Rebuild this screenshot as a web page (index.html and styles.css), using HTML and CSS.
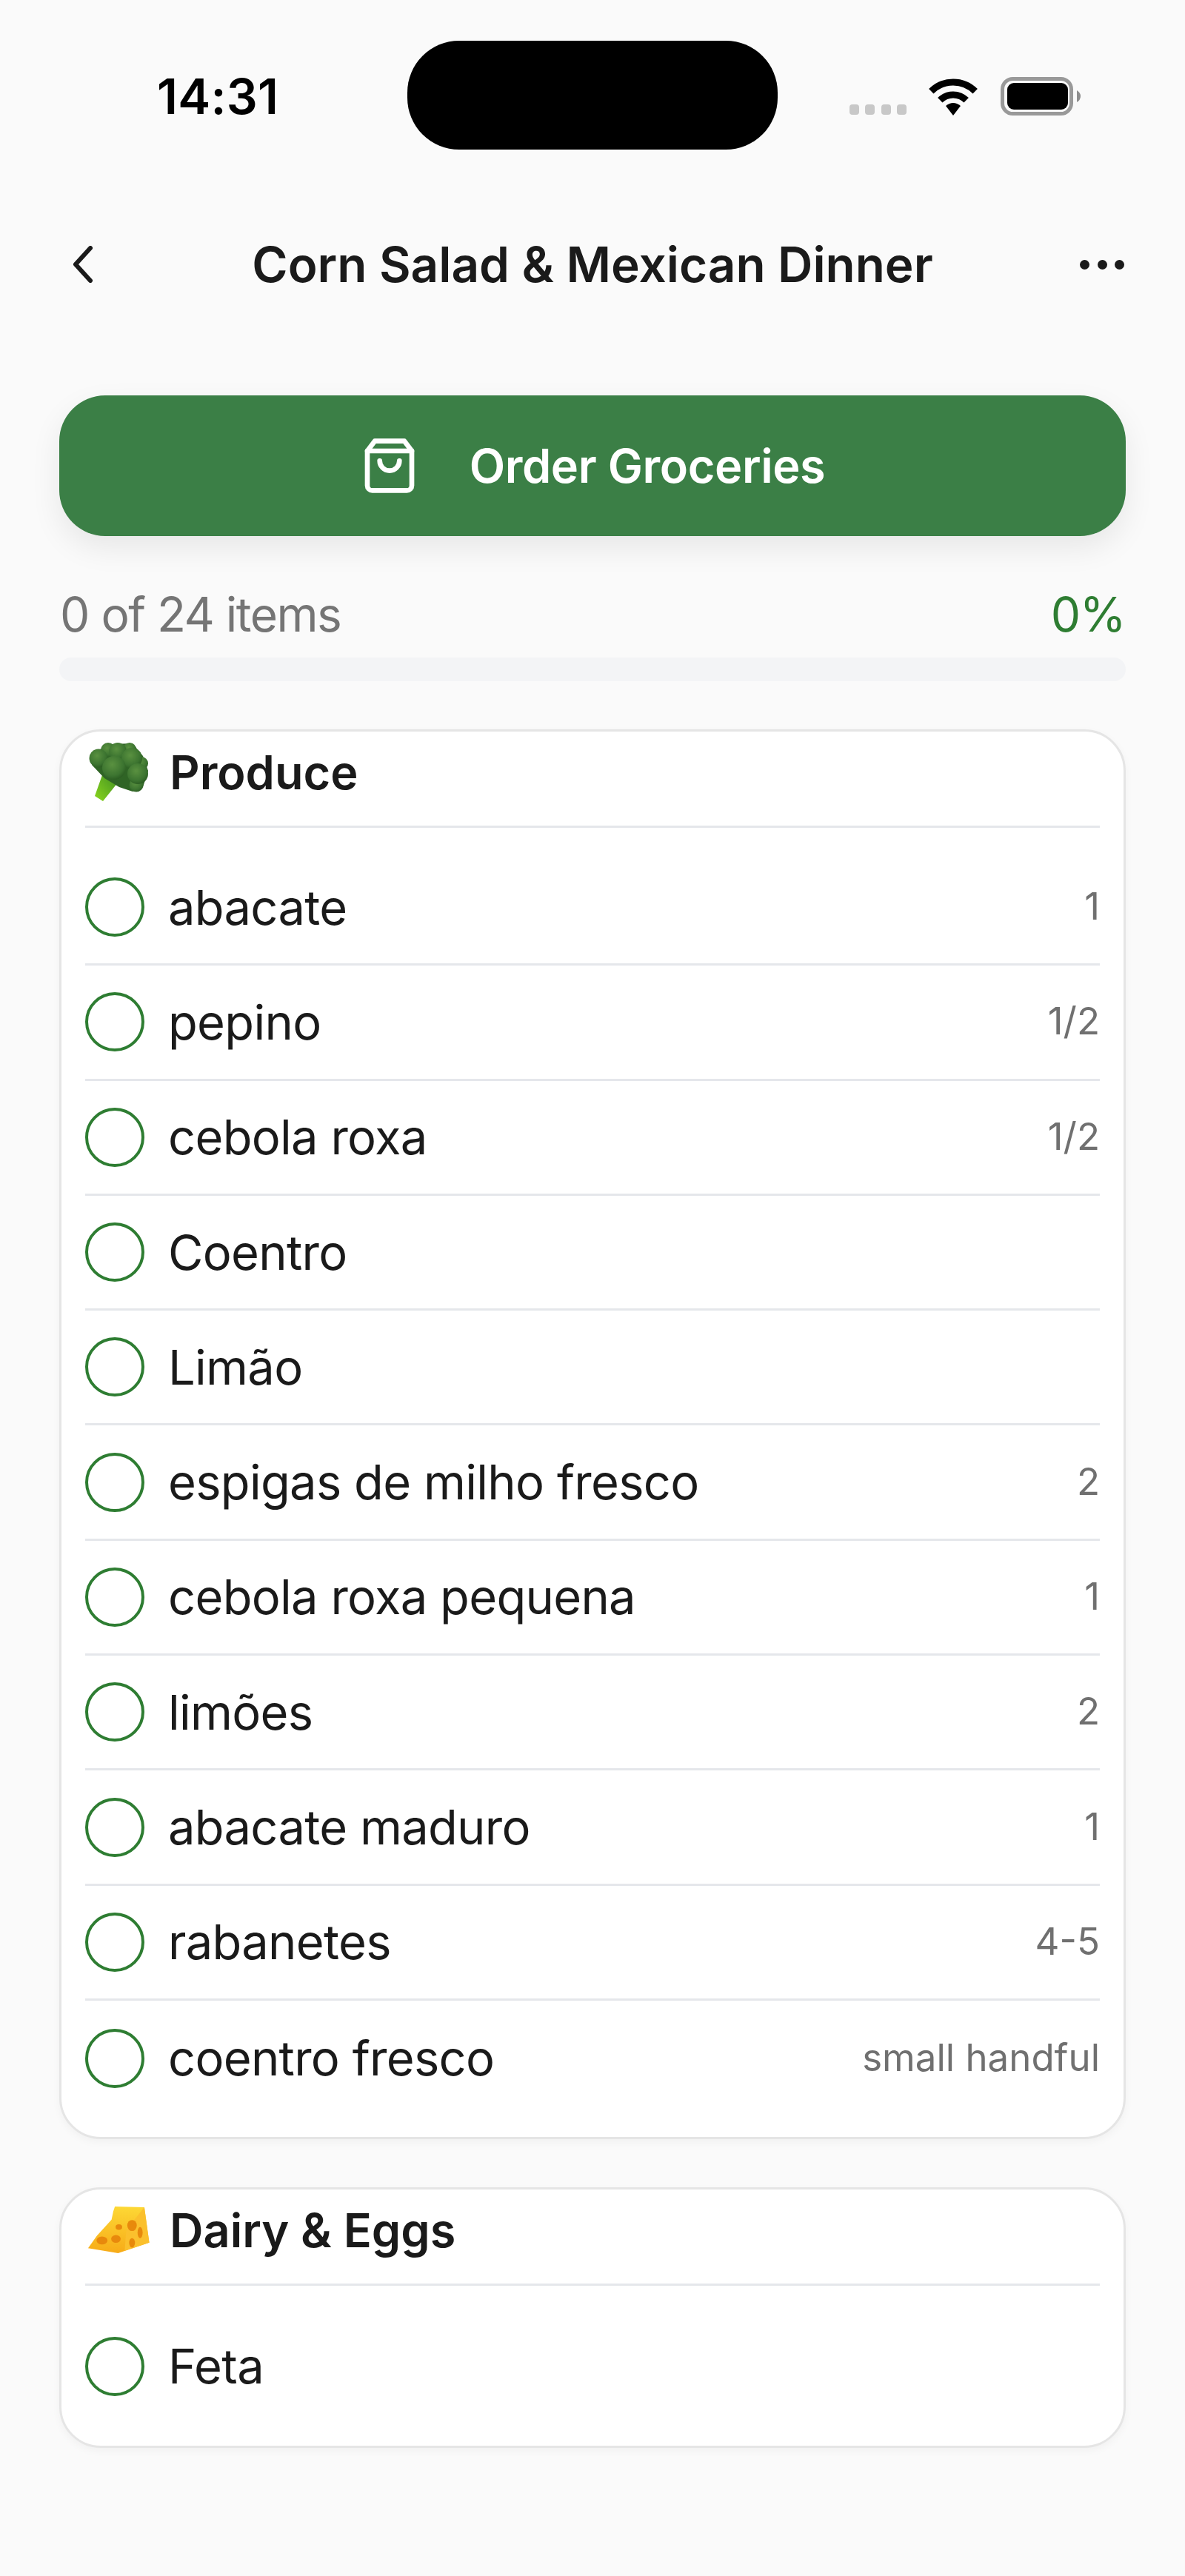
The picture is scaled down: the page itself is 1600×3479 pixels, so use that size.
FILE: index.html
```html
<!DOCTYPE html>
<html lang="pt">
<head>
    <meta charset="UTF-8">
    <meta name="viewport" content="width=device-width, initial-scale=1.0">
    <title>Corn Salad &amp; Mexican Dinner</title>
    <link rel="stylesheet" href="styles.css">
</head>
<body>
    <!-- Status bar -->
    <div class="status-bar">
        <div class="status-left"><span class="time">14:31</span></div>
        <div class="island"></div>
        <div class="status-right">
            <div class="signal"><i></i><i></i><i></i><i></i></div>
            <svg class="wifi" width="66" height="51" viewBox="0 0 66 51">
                <path d="M3.3 18.3a42 42 0 0 1 59.4 0M15.3 30.3a25 25 0 0 1 35.4 0" fill="none" stroke="#000" stroke-width="9"/>
                <path d="M33 51L23 38Q33 30 43 38Z" fill="#000"/>
            </svg>
            <svg class="battery" width="108" height="52" viewBox="0 0 108 52">
                <rect x="2.5" y="2.5" width="93" height="47" rx="14" fill="none" stroke="#999" stroke-width="5"/>
                <rect x="9" y="8" width="82" height="36" rx="9" fill="#000"/>
                <path d="M103 18q5 3 5 8t-5 8z" fill="#8e8e8e"/>
            </svg>
        </div>
    </div>

    <header class="top-nav">
        <svg class="back" width="28" height="50" viewBox="0 0 28 50">
            <path d="M24 3L4 25L24 47" fill="none" stroke="#1a1a1a" stroke-width="6" stroke-linecap="round" stroke-linejoin="round"/>
        </svg>
        <h1>Corn Salad &amp; Mexican Dinner</h1>
        <div class="more"><i></i><i></i><i></i></div>
    </header>

    <main class="content">
        <button class="order-btn">
            <svg width="80" height="80" viewBox="0 0 24 24" fill="none" stroke="#fff" stroke-width="2" stroke-linecap="round" stroke-linejoin="round">
                <path d="M6 2L3 6v14a2 2 0 0 0 2 2h14a2 2 0 0 0 2-2V6l-3-4z"/>
                <path d="M3 6h18"/>
                <path d="M16 10a4 4 0 0 1-8 0"/>
            </svg>
            <span>Order Groceries</span>
        </button>

        <div class="progress-info">
            <span>0 of 24 items</span>
            <span class="percent">0%</span>
        </div>
        <div class="progress-bar"></div>

        <section class="card">
            <div class="card-head">
                <svg class="emoji" width="89" height="80" viewBox="-6 0 89 80">
                    <defs>
                        <radialGradient id="floret" cx="42%" cy="36%" r="68%">
                            <stop offset="0" stop-color="#5a9140"/>
                            <stop offset=".7" stop-color="#3c7430"/>
                            <stop offset="1" stop-color="#295a20"/>
                        </radialGradient>
                        <linearGradient id="stem" x1="0" y1="1" x2="1" y2="0">
                            <stop offset="0" stop-color="#8ad61e"/>
                            <stop offset="1" stop-color="#3f8f22"/>
                        </linearGradient>
                    </defs>
                    <path d="M18 41L38 54L18 79L7 72Z" fill="url(#stem)"/>
                    <path d="M8 12L28 2L58 1L72 18L79 38L72 60L58 66L40 60L20 48L3 30Z" fill="#2f6425"/>
                    <circle cx="25" cy="10" r="10" fill="url(#floret)"/>
                    <circle cx="54" cy="9" r="9" fill="url(#floret)"/>
                    <circle cx="38" cy="12" r="12" fill="url(#floret)"/>
                    <circle cx="70" cy="28" r="9" fill="url(#floret)"/>
                    <circle cx="63" cy="57" r="9.5" fill="url(#floret)"/>
                    <circle cx="12" cy="21" r="12.5" fill="url(#floret)"/>
                    <circle cx="57" cy="21" r="14" fill="url(#floret)"/>
                    <circle cx="65" cy="42" r="14" fill="url(#floret)"/>
                    <circle cx="33" cy="34" r="16" fill="url(#floret)"/>
                </svg>
                <h2>Produce</h2>
            </div>
            <ul class="items">
                <li><span class="check"></span><span class="name">abacate</span><span class="qty">1</span></li>
                <li><span class="check"></span><span class="name">pepino</span><span class="qty">1/2</span></li>
                <li><span class="check"></span><span class="name">cebola roxa</span><span class="qty">1/2</span></li>
                <li><span class="check"></span><span class="name">Coentro</span></li>
                <li><span class="check"></span><span class="name">Limão</span></li>
                <li><span class="check"></span><span class="name">espigas de milho fresco</span><span class="qty">2</span></li>
                <li><span class="check"></span><span class="name">cebola roxa pequena</span><span class="qty">1</span></li>
                <li><span class="check"></span><span class="name">limões</span><span class="qty">2</span></li>
                <li><span class="check"></span><span class="name">abacate maduro</span><span class="qty">1</span></li>
                <li><span class="check"></span><span class="name">rabanetes</span><span class="qty">4-5</span></li>
                <li><span class="check"></span><span class="name">coentro fresco</span><span class="qty">small handful</span></li>
            </ul>
        </section>

        <section class="card">
            <div class="card-head">
                <svg class="emoji" width="89" height="64" viewBox="-4 0 90 60" preserveAspectRatio="none">
                    <defs>
                        <linearGradient id="cheese" x1="0" y1="0" x2="0" y2="1">
                            <stop offset="0" stop-color="#fdd835"/>
                            <stop offset="1" stop-color="#f7ab18"/>
                        </linearGradient>
                    </defs>
                    <path d="M36.6 0L76.8 1L83.5 45.6L41 59L0 52.7L12 37L32 16.6L34.4 6Z" fill="url(#cheese)"/>
                    <path d="M76.8 1L83.5 45.6L50 56L52 30Z" fill="#fbc02d"/>
                    <g fill="#e8890c">
                        <ellipse cx="42" cy="26" rx="4.5" ry="3.5"/>
                        <ellipse cx="60" cy="24" rx="6.5" ry="7"/>
                        <ellipse cx="71" cy="33" rx="3.5" ry="7"/>
                        <ellipse cx="38" cy="41" rx="6.5" ry="5"/>
                        <ellipse cx="19" cy="43" rx="7.5" ry="5"/>
                        <ellipse cx="60" cy="46" rx="4" ry="6"/>
                    </g>
                </svg>
                <h2>Dairy &amp; Eggs</h2>
            </div>
            <ul class="items">
                <li><span class="check"></span><span class="name">Feta</span></li>
            </ul>
        </section>
    </main>
</body>
</html>
```

FILE: styles.css
```css
html, body {
    margin: 0;
    padding: 0;
}
body {
    height: 3479px;
    overflow: hidden;
    background-color: #fafafa;
    color: #1a1a1a;
    font-family: 'Inter', 'Liberation Sans', sans-serif;
}

/* status bar */
.status-bar {
    display: flex;
    align-items: flex-start;
    padding-top: 55px;
}
.status-left {
    width: 550px;
    box-sizing: border-box;
    padding-left: 212px;
}
.time {
    display: block;
    margin-top: 42px;
    font-size: 66px;
    line-height: 66px;
    font-weight: 600;
    letter-spacing: 0.3px;
    color: #000;
}
.island {
    width: 500px;
    height: 147px;
    background-color: #000;
    border-radius: 70px;
}
.status-right {
    display: flex;
    align-items: flex-end;
    height: 52px;
    margin-top: 49px;
    margin-left: 97px;
}
.signal {
    display: flex;
    gap: 8.4px;
    margin-bottom: 1px;
}
.signal i {
    width: 13px;
    height: 14px;
    border-radius: 4px;
    background-color: #c8c8c8;
}
.wifi {
    margin-left: 30px;
}
.battery {
    margin-left: 31px;
}

/* nav */
.top-nav {
    display: grid;
    grid-template-columns: 80px 1fr 80px;
    align-items: center;
    height: 100px;
    margin-top: 105px;
    padding: 0 80px;
}
.back {
    margin-left: 18px;
}
.top-nav h1 {
    margin: 0;
    font-size: 65.6px;
    line-height: 100px;
    font-weight: 600;
    text-align: center;
    white-space: nowrap;
}
.more {
    display: flex;
    justify-content: flex-end;
    gap: 10.5px;
    margin-right: 2px;
}
.more i {
    width: 13px;
    height: 13px;
    border-radius: 50%;
    background-color: #1a1a1a;
}

.content {
    padding: 0 80px;
}

.order-btn {
    display: flex;
    align-items: center;
    justify-content: center;
    gap: 68px;
    width: 100%;
    height: 190px;
    margin-top: 127px;
    border: none;
    border-radius: 62px;
    background-color: #3b7f46;
    box-shadow: 0 16px 40px rgba(0, 0, 0, 0.08);
    color: #fff;
    font-family: inherit;
    font-size: 63px;
    font-weight: 600;
    letter-spacing: -0.4px;
}

.progress-info {
    display: flex;
    justify-content: space-between;
    margin-top: 78px;
    padding: 0 1px;
    font-size: 64px;
    line-height: 56px;
    letter-spacing: -1.5px;
    color: #757575;
}
.percent {
    color: #2e7d32;
}
.progress-bar {
    height: 32px;
    margin-top: 30px;
    border-radius: 16px;
    background-color: #f3f4f6;
}

/* cards */
.card {
    margin-top: 65px;
    padding: 0 32px 29px;
    border: 3px solid #e5e5e5;
    border-radius: 56px;
    background-color: #fff;
    box-shadow: 0 4px 12px rgba(0, 0, 0, 0.04);
}
.card-head {
    display: flex;
    align-items: center;
    gap: 25px;
    box-sizing: border-box;
    height: 130px;
    padding-bottom: 17px;
    border-bottom: 3px solid #e5e7eb;
}
.card-head h2 {
    margin: 0;
    font-size: 63px;
    font-weight: 600;
}
.card-head .emoji {
    flex: none;
}
.items {
    list-style: none;
    margin: 31px 0 0;
    padding: 0;
}
.items li {
    display: flex;
    align-items: center;
    box-sizing: border-box;
    height: 155.3px;
    border-bottom: 3px solid #e5e7eb;
}
.items li:last-child {
    border-bottom: none;
}
.check {
    flex: none;
    box-sizing: border-box;
    width: 80px;
    height: 80px;
    margin-right: 32px;
    border: 4px solid #2e7d32;
    border-radius: 50%;
}
.name {
    flex: 1;
    font-size: 65px;
    letter-spacing: -0.7px;
}
.qty {
    font-size: 51px;
    margin-bottom: 3px;
    color: #707070;
}
```
